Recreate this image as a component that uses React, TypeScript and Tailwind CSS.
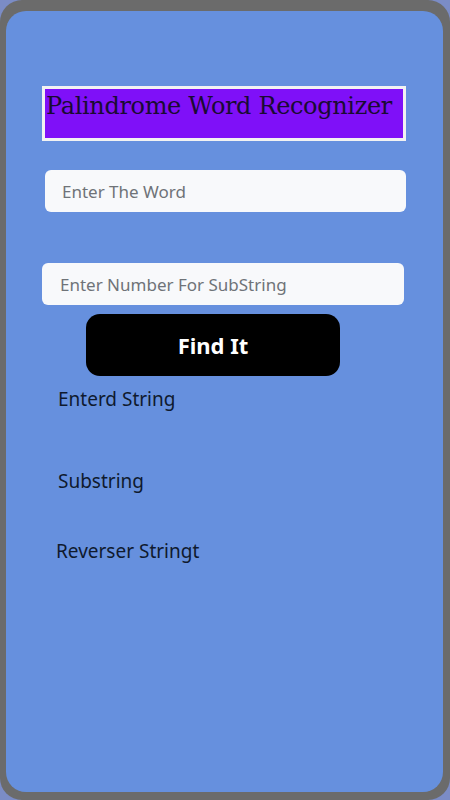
import React from "react";

export default function App() {
  return (
    <div className="w-[450px] h-[800px] bg-[#7b8cc6] overflow-hidden">
      <div className="w-[450px] h-[800px] bg-[#6b6b6b] rounded-[22px] pt-[11px] pl-[6px] pr-[7px] pb-[8px]">
        <div className="w-full h-full bg-[#6690de] rounded-[20px] flex flex-col" style={{ fontFamily: '"Noto Sans", sans-serif' }}>
          <div className="mt-[75px] ml-[36px] w-[364px] h-[55px] border-[3px] border-[#f2f2f2] bg-[#7f10f8] flex items-start pt-[3px]">
            <span className="ml-[1px] text-[24px] leading-[28px] tracking-[-0.35px] text-[#1a0b33]" style={{ fontFamily: '"DejaVu Serif", serif' }}>
              Palindrome Word Recognizer
            </span>
          </div>
          <input
            className="mt-[29px] ml-[39px] w-[361px] h-[42px] rounded-[6px] bg-[#f8f9fb] pl-[17px] text-[17px] placeholder:text-[#6f7378] outline-none"
            placeholder="Enter The Word"
          />
          <input
            className="mt-[51px] ml-[36px] w-[362px] h-[42px] rounded-[6px] bg-[#f8f9fb] pl-[18px] text-[17px] placeholder:text-[#6f7378] outline-none"
            placeholder="Enter Number For SubString"
          />
          <button className="mt-[9px] ml-[80px] w-[254px] h-[62px] rounded-[14px] bg-black text-white text-[22px] font-bold">
            Find It
          </button>
          <div className="ml-[52px] mt-[9px] text-[19px] text-[#0f1a2e]">Enterd String</div>
          <div className="ml-[52px] mt-[53px] text-[19px] text-[#0f1a2e]">Substring</div>
          <div className="ml-[50px] mt-[42px] text-[19px] text-[#0f1a2e]">Reverser Stringt</div>
        </div>
      </div>
    </div>
  );
}
